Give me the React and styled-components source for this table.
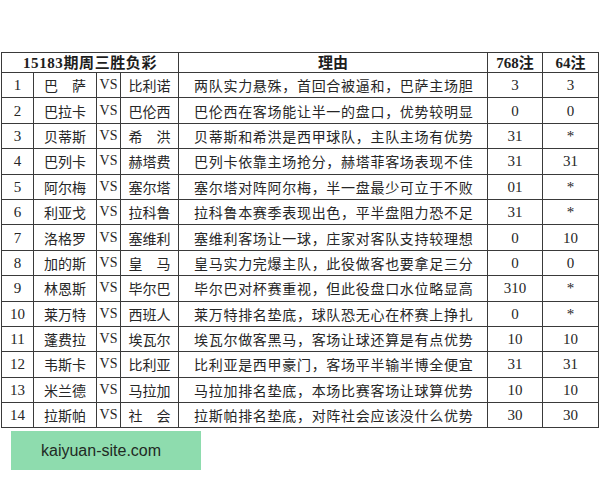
import React from "react";
import styled, { createGlobalStyle } from "styled-components";

const GlobalStyle = createGlobalStyle`
  html, body {
    margin: 0;
    padding: 0;
    background: #fff;
  }
  body {
    font-family: "Liberation Serif", "Noto Sans CJK SC", serif;
    color: #222;
  }
`;

const matches = [
  ["1", "巴　萨", "比利诺", "两队实力悬殊，首回合被逼和，巴萨主场胆", "3", "3"],
  ["2", "巴拉卡", "巴伦西", "巴伦西在客场能让半一的盘口，优势较明显", "0", "0"],
  ["3", "贝蒂斯", "希　洪", "贝蒂斯和希洪是西甲球队，主队主场有优势", "31", "*"],
  ["4", "巴列卡", "赫塔费", "巴列卡依靠主场抢分，赫塔菲客场表现不佳", "31", "31"],
  ["5", "阿尔梅", "塞尔塔", "塞尔塔对阵阿尔梅，半一盘最少可立于不败", "01", "*"],
  ["6", "利亚戈", "拉科鲁", "拉科鲁本赛季表现出色，平半盘阻力恐不足", "31", "*"],
  ["7", "洛格罗", "塞维利", "塞维利客场让一球，庄家对客队支持较理想", "0", "10"],
  ["8", "加的斯", "皇　马", "皇马实力完爆主队，此役做客也要拿足三分", "0", "0"],
  ["9", "林恩斯", "毕尔巴", "毕尔巴对杯赛重视，但此役盘口水位略显高", "310", "*"],
  ["10", "莱万特", "西班人", "莱万特排名垫底，球队恐无心在杯赛上挣扎", "0", "*"],
  ["11", "蓬费拉", "埃瓦尔", "埃瓦尔做客黑马，客场让球还算是有点优势", "10", "10"],
  ["12", "韦斯卡", "比利亚", "比利亚是西甲豪门，客场平半输半博全便宜", "31", "31"],
  ["13", "米兰德", "马拉加", "马拉加排名垫底，本场比赛客场让球算优势", "10", "10"],
  ["14", "拉斯帕", "社　会", "拉斯帕排名垫底，对阵社会应该没什么优势", "30", "30"],
];

const Page = styled.div`
  padding-top: 52px;
  padding-left: 1px;
`;

const Table = styled.table`
  border-collapse: collapse;
  table-layout: fixed;
  width: 597px;
`;

const HeadRow = styled.tr`
  height: 20px;
`;

const Row = styled.tr`
  height: 25.4px;
`;

const HeadCell = styled.th`
  border: 1px solid #3a3a3a;
  padding: 0;
  font-size: 15px;
  font-weight: bold;
  letter-spacing: ${(p) => (p.$spread ? "0.6px" : "0")};
  text-align: center;
  line-height: 18px;
  color: #1e1e1e;
`;

const Cell = styled.td`
  border: 1px solid #3a3a3a;
  padding: 0;
  text-align: ${(p) => p.$align || "center"};
  font-size: ${(p) => p.$size || "14px"};
  letter-spacing: ${(p) => p.$spacing || "0"};
  line-height: 22px;
  white-space: nowrap;
  overflow: hidden;
  color: #262626;
  font-family: ${(p) =>
    p.$cjk
      ? `"Noto Sans CJK SC", sans-serif`
      : `"Liberation Serif", "Noto Sans CJK SC", serif`};
  font-weight: normal;
`;

const Reason = styled(Cell)`
  padding-left: 15px;
`;

const Banner = styled.div`
  margin: 3px 0 0 10px;
  width: 190px;
  height: 39px;
  background: #8edcae;
  display: flex;
  align-items: center;
  padding-left: 30px;
  box-sizing: border-box;
  font-family: "Liberation Sans", Arial, sans-serif;
  font-size: 16px;
  color: #1f2a24;
`;

export default function App() {
  return (
    <>
      <GlobalStyle />
      <Page>
        <Table>
          <colgroup>
            <col style={{ width: 32 }} />
            <col style={{ width: 63 }} />
            <col style={{ width: 24 }} />
            <col style={{ width: 58 }} />
            <col style={{ width: 309 }} />
            <col style={{ width: 55 }} />
            <col style={{ width: 56 }} />
          </colgroup>
          <thead>
            <HeadRow>
              <HeadCell colSpan={4} $spread>
                15183期周三胜负彩
              </HeadCell>
              <HeadCell>理由</HeadCell>
              <HeadCell>768注</HeadCell>
              <HeadCell>64注</HeadCell>
            </HeadRow>
          </thead>
          <tbody>
            {matches.map(([no, home, away, reason, a, b]) => (
              <Row key={no}>
                <Cell $size="15px">{no}</Cell>
                <Cell $cjk>{home}</Cell>
                <Cell $size="14px">VS</Cell>
                <Cell $cjk>{away}</Cell>
                <Reason $cjk $align="left" $spacing="0.7px">
                  {reason}
                </Reason>
                <Cell $size="15px">{a}</Cell>
                <Cell $size="15px">{b}</Cell>
              </Row>
            ))}
          </tbody>
        </Table>
        <Banner>kaiyuan-site.com</Banner>
      </Page>
    </>
  );
}
